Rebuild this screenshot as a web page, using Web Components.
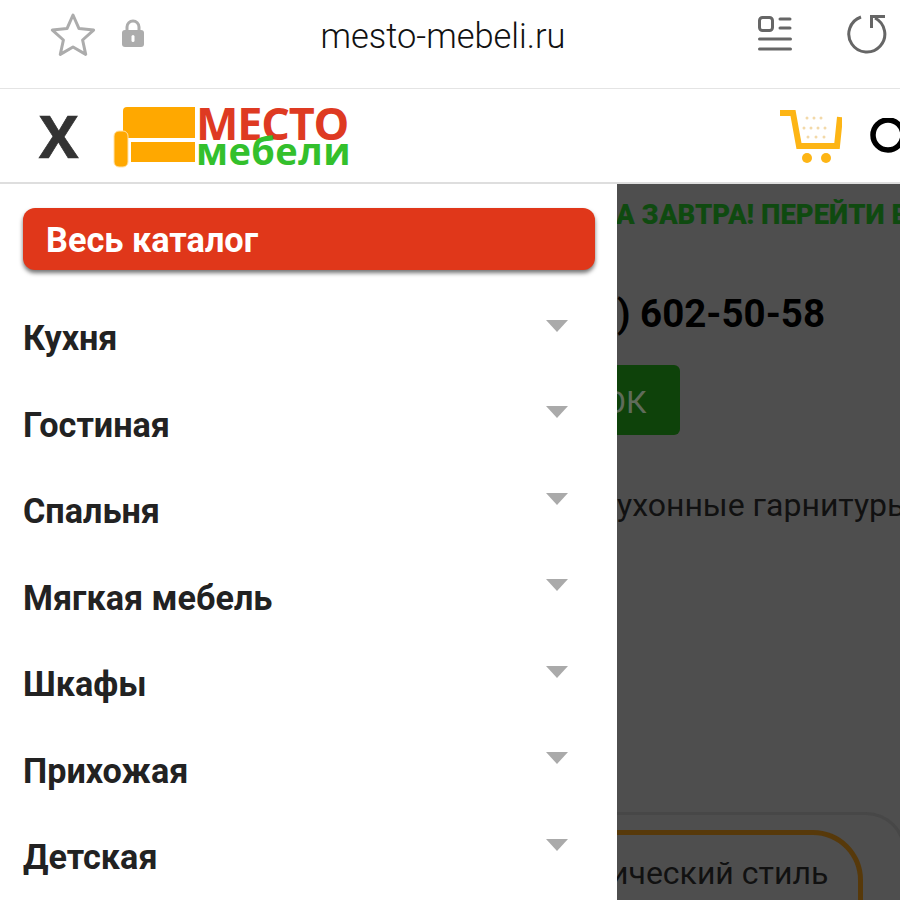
<!DOCTYPE html>
<html lang="ru">
<head>
<meta charset="utf-8">
<title>mesto-mebeli.ru</title>
<style>
  html, body { margin: 0; height: 100%; }
  body { height: 900px; overflow: hidden; display: flex; flex-direction: column; font-family: Roboto, "Liberation Sans", sans-serif; background: #fff; }
</style>
</head>
<body>
<browser-bar url="mesto-mebeli.ru"></browser-bar>
<site-header></site-header>
<page-main>
  <side-menu>
    <catalog-button>Весь каталог</catalog-button>
    <menu-item>Кухня</menu-item>
    <menu-item>Гостиная</menu-item>
    <menu-item>Спальня</menu-item>
    <menu-item>Мягкая мебель</menu-item>
    <menu-item>Шкафы</menu-item>
    <menu-item>Прихожая</menu-item>
    <menu-item>Детская</menu-item>
  </side-menu>
  <dimmed-page></dimmed-page>
</page-main>

<script>
class BrowserBar extends HTMLElement
{
  constructor()
  {
    super();
    this.attachShadow({mode: "open"});
  }

  connectedCallback()
  {
    const url = this.getAttribute("url") ?? "";
    this.shadowRoot.innerHTML = `
      <style>
        :host { display: flex; align-items: center; box-sizing: border-box; height: 89px; flex: none; border-bottom: 1px solid #e4e4e4; background: #fff; }
        svg { display: block; flex: none; }
        .star { margin: 0 0 21px 50px; }
        .lock { margin: 0 0 23px 26px; }
        .url { flex: 1; text-align: center; font-size: 34.400px; font-weight: 350; color: #111; margin: 0 0 17px 0; padding-right: 16px; }
        .list { margin: 0 0 21px 0; }
        .reload { margin: 0 13px 21px 55px; }
      </style>
      <svg class="star" width="46" height="44" viewBox="0 0 46 44"><path d="M23 3l6 13.6 14.6 1.5-11 9.9 3.1 14.400-12.700-7.400-12.700 7.400 3.100-14.400-11-9.900 14.600-1.500z" fill="none" stroke="#acacac" stroke-width="3" stroke-linejoin="round"/></svg>
      <svg class="lock" width="22" height="28" viewBox="0 0 22 28"><path d="M5 12V8a6 6 0 0 1 12 0v4" fill="none" stroke="#acacac" stroke-width="3"/><rect x="0" y="11" width="22" height="17" rx="3" fill="#acacac"/><rect x="9.500" y="16" width="3" height="7" rx="1.500" fill="#fff"/></svg>
      <span class="url">${url}</span>
      <svg class="list" width="34" height="35" viewBox="0 0 34 35" fill="none" stroke="#666" stroke-width="3" stroke-linecap="round"><rect x="1.500" y="1.500" width="13" height="13" rx="3"/><path d="M22 3h10M22 12h10M1.500 23h31M1.500 33h31"/></svg>
      <svg class="reload" width="40" height="40" viewBox="0 0 40 40" fill="none" stroke="#666" stroke-width="3"><path d="M14 3A18 18 0 1 0 28 4"/><path d="M24.500 14V2.500H38"/></svg>
    `;
  }
}

class SiteHeader extends HTMLElement
{
  constructor()
  {
    super();
    this.attachShadow({mode: "open"});
    this.shadowRoot.innerHTML = `
      <style>
        :host { display: flex; align-items: center; box-sizing: border-box; height: 95px; flex: none; background: #fff; border-bottom: 2px solid #dedede; overflow: hidden; }
        .close { font: 700 59px "Open Sans", sans-serif; -webkit-text-stroke: 0.700px #333; color: #333; margin-left: 39px; line-height: 1; width: 74px; flex: none; }
        .sofa { display: block; flex: none; }
        .logo { display: flex; align-items: flex-start; flex: none; margin-top: 3px; }
        .words { display: flex; flex-direction: column; margin-left: 1px; }
        .mesto { font: 700 45px/33px "Open Sans", sans-serif; color: #de3a22; letter-spacing: -1.200px; }
        .mebeli { font: 700 38px/26px "Open Sans", sans-serif; color: #33c02c; letter-spacing: 0.400px; margin-top: -2px; }
        .cart { margin-left: auto; flex: none; display: block; }
        .search { margin: 0 -6px 0 28px; flex: none; display: block; }
      </style>
      <span class="close">X</span>
      <div class="logo">
        <svg class="sofa" width="82" height="62" viewBox="0 0 82 62"><path d="M10 5a4 4 0 0 1 4-4h68v31H10z" fill="#ffa800"/><path d="M18 36h64v20H18z" fill="#ffa800"/><rect x="1" y="25" width="14" height="36" rx="5" fill="#ffa800" stroke="#ffe2a8"/></svg>
        <div class="words"><span class="mesto">МЕСТО</span><span class="mebeli">мебели</span></div>
      </div>
      <svg class="cart" width="62" height="56" viewBox="0 0 62 56"><path d="M0 5h13l6 33h38l3-29" fill="none" stroke="#fdb515" stroke-width="6"/><g fill="#f3d9a8"><circle cx="27" cy="10" r="1.500"/><circle cx="34" cy="10" r="1.500"/><circle cx="41" cy="10" r="1.500"/><circle cx="24" cy="20" r="1.500"/><circle cx="31" cy="20" r="1.500"/><circle cx="38" cy="20" r="1.500"/><circle cx="45" cy="20" r="1.500"/><circle cx="28" cy="29" r="1.500"/><circle cx="36" cy="29" r="1.500"/><circle cx="44" cy="29" r="1.500"/></g><circle cx="27" cy="50" r="5" fill="#fdb515"/><circle cx="46" cy="50" r="5" fill="#fdb515"/></svg>
      <svg class="search" width="36" height="36" viewBox="0 0 36 36"><circle cx="18" cy="17" r="15" fill="none" stroke="#000" stroke-width="5.500"/></svg>
    `;
  }
}

class PageMain extends HTMLElement
{
  constructor()
  {
    super();
    this.attachShadow({mode: "open"});
    this.shadowRoot.innerHTML = `
      <style>
        :host { display: flex; flex: 1; min-height: 0; overflow: hidden; }
      </style>
      <slot></slot>
    `;
  }
}

class SideMenu extends HTMLElement
{
  constructor()
  {
    super();
    this.attachShadow({mode: "open"});
    this.shadowRoot.innerHTML = `
      <style>
        :host { display: flex; flex-direction: column; box-sizing: border-box; width: 617px; flex: none; background: #fff; padding: 24px 22px 0 23px; }
      </style>
      <slot></slot>
    `;
  }
}

class CatalogButton extends HTMLElement
{
  constructor()
  {
    super();
    this.attachShadow({mode: "open"});
    this.shadowRoot.innerHTML = `
      <style>
        :host { display: flex; align-items: center; box-sizing: border-box; height: 62px; flex: none; padding: 2px 23px 0; margin-bottom: 24px; border-radius: 12px; background: #e0371a; color: #fff; font-size: 34.300px; font-weight: 700; box-shadow: 0 3px 4px rgba(0,0,0,.55); }
      </style>
      <slot></slot>
    `;
  }
}

class MenuItem extends HTMLElement
{
  constructor()
  {
    super();
    this.attachShadow({mode: "open"});
    this.shadowRoot.innerHTML = `
      <style>
        :host { display: flex; align-items: center; justify-content: space-between; height: 86.500px; flex: none; color: #222; font-size: 34.200px; font-weight: 700; }
        .label { padding-top: 2px; }
        .arrow { width: 0; height: 0; margin: 0 27px 23px 0; border-left: 11px solid transparent; border-right: 11px solid transparent; border-top: 12px solid #aaa; }
      </style>
      <span class="label"><slot></slot></span>
      <span class="arrow"></span>
    `;
  }
}

class DimmedPage extends HTMLElement
{
  constructor()
  {
    super();
    this.attachShadow({mode: "open"});
    this.shadowRoot.innerHTML = `
      <style>
        :host { display: flex; flex-direction: column; flex: 1; min-width: 0; overflow: hidden; background: #4e4e4e; white-space: nowrap; }
        .promo { font-size: 27.500px; font-weight: 900; color: #0f4a10; margin: 16px 0 0 -1px; line-height: 30px; }
        .phone { font-size: 38.500px; font-weight: 700; color: #000; margin: 62px 0 0 0; line-height: 44px; }
        .ok { box-sizing: border-box; width: 63px; height: 70px; margin-top: 29px; background: #0e420a; border-radius: 0 6px 6px 0; color: #5f6b5a; font-size: 32px; font-weight: 400; line-height: 74px; text-indent: -13px; }
        .kitchen { font-size: 32px; color: #111; margin: 52px 0 0 0; line-height: 36px; }
        .box { margin: 289px 0 0 0; height: 200px; border: 3px solid #474747; border-left: 0; border-radius: 0 40px 0 0; margin-right: -6px; padding-top: 15px; }
        .pill { box-sizing: border-box; width: 246px; height: 120px; border: 5px solid #57390a; border-left: 0; border-radius: 0 50px 50px 0; color: #111; font-size: 32px; line-height: 36px; padding-top: 20px; text-indent: -7px; }
      </style>
      <div class="promo">А ЗАВТРА! ПЕРЕЙТИ В</div>
      <div class="phone">) 602-50-58</div>
      <div class="ok">ОК</div>
      <div class="kitchen">ухонные гарнитуры</div>
      <div class="box"><div class="pill">ический стиль</div></div>
    `;
  }
}

customElements.define("browser-bar", BrowserBar);
customElements.define("site-header", SiteHeader);
customElements.define("page-main", PageMain);
customElements.define("side-menu", SideMenu);
customElements.define("catalog-button", CatalogButton);
customElements.define("menu-item", MenuItem);
customElements.define("dimmed-page", DimmedPage);
</script>
</body>
</html>
